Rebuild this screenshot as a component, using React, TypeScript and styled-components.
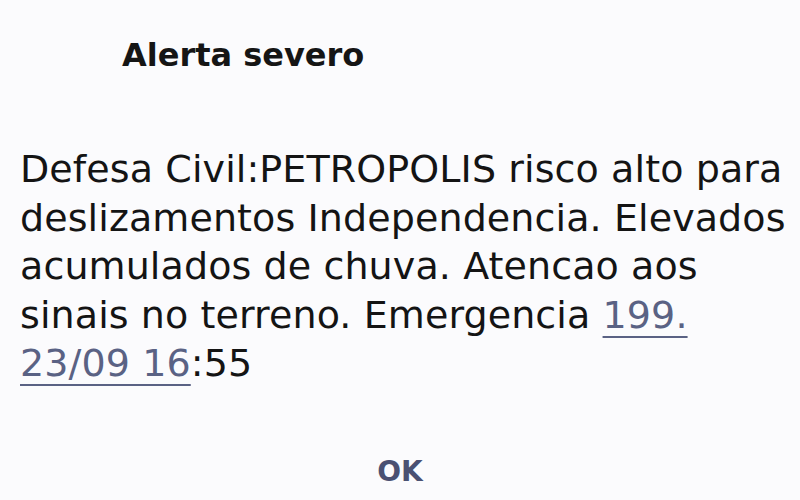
import React from 'react';
import styled, { createGlobalStyle } from 'styled-components';

const GlobalStyle = createGlobalStyle`
  html, body {
    margin: 0;
    padding: 0;
    background: #fbfbfd;
  }
  body {
    font-family: 'DejaVu Sans', 'Noto Sans', sans-serif;
    color: #111;
  }
`;

const Dialog = styled.div`
  width: 800px;
  height: 500px;
  box-sizing: border-box;
  display: flex;
  flex-direction: column;
  background: #fbfbfd;
`;

const Title = styled.h1`
  margin: 0;
  padding: 35px 0 0 122px;
  font-size: 32px;
  font-weight: 700;
  line-height: 40px;
  color: #151515;
`;

const Message = styled.p`
  margin: 0;
  padding: 70px 0 0 20px;
  font-size: 38px;
  line-height: 48.5px;
  letter-spacing: 0.1px;
  font-weight: 400;
  color: #141414;
  white-space: nowrap;
`;

const Link = styled.a`
  color: #5a6284;
  text-decoration: underline;
  text-underline-offset: 8px;
  text-decoration-thickness: 2px;
`;

const Actions = styled.div`
  margin-top: auto;
  display: flex;
  justify-content: center;
  padding-bottom: 12px;
`;

const OkButton = styled.button`
  border: none;
  background: none;
  font-family: inherit;
  font-size: 28px;
  font-weight: 700;
  color: #4a5172;
  padding: 0 8px;
`;

export default function App() {
  return (
    <>
      <GlobalStyle />
      <Dialog>
        <Title>Alerta severo</Title>
        <Message>
          Defesa Civil:PETROPOLIS risco alto para
          <br />
          deslizamentos Independencia. Elevados
          <br />
          acumulados de chuva. Atencao aos
          <br />
          sinais no terreno. Emergencia <Link>199.</Link>
          <br />
          <Link>23/09 16</Link>:55
        </Message>
        <Actions>
          <OkButton>OK</OkButton>
        </Actions>
      </Dialog>
    </>
  );
}
